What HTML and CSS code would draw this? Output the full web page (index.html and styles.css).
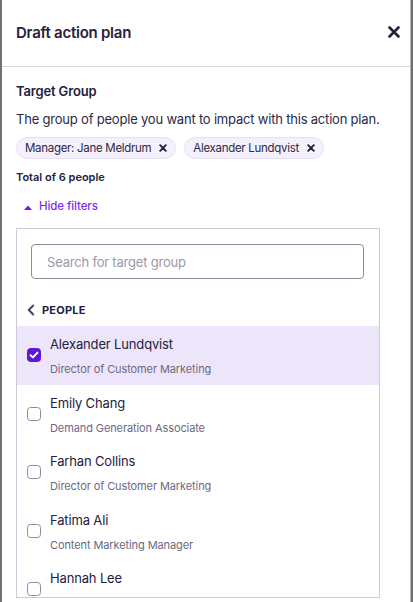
FILE: index.html
```html
<!DOCTYPE html>
<html lang="en">
<head>
<meta charset="utf-8">
<title>Draft action plan</title>
<link rel="stylesheet" href="styles.css">
</head>
<body>
<div class="panel">
  <header class="header">
    <h1 class="title">Draft action plan</h1>
    <button class="close" aria-label="Close">
      <svg width="12" height="12" viewBox="0 0 12 12"><path d="M1.5 1.5 L10.5 10.5 M10.5 1.5 L1.5 10.5" stroke="#24213f" stroke-width="2.6" stroke-linecap="round"/></svg>
    </button>
  </header>
  <div class="content">
    <h2 class="label">Target Group</h2>
    <p class="desc">The group of people you want to impact with this action plan.</p>
    <div class="chips">
      <span class="chip">Manager: Jane Meldrum <svg class="chip-x" width="8" height="8" viewBox="0 0 8 8"><path d="M1.2 1.2 L6.8 6.8 M6.8 1.2 L1.2 6.8" stroke="#24213f" stroke-width="1.9" stroke-linecap="round"/></svg></span>
      <span class="chip">Alexander Lundqvist <svg class="chip-x" width="8" height="8" viewBox="0 0 8 8"><path d="M1.2 1.2 L6.8 6.8 M6.8 1.2 L1.2 6.8" stroke="#24213f" stroke-width="1.9" stroke-linecap="round"/></svg></span>
    </div>
    <p class="total">Total of 6 people</p>
    <button class="toggle">
      <svg width="8" height="5" viewBox="0 0 8 5"><path d="M0 5 L4 0.5 L8 5 Z" fill="#6b1fd1"/></svg>
      <span>Hide filters</span>
    </button>
    <div class="filter-box">
      <div class="search-wrap">
        <input class="search" type="text" placeholder="Search for target group">
      </div>
      <div class="crumb">
        <svg width="8" height="12" viewBox="0 0 8 12"><path d="M6.2 1.5 L1.8 6 L6.2 10.5" stroke="#4a4660" stroke-width="2" fill="none" stroke-linecap="round" stroke-linejoin="round"/></svg>
        <span>PEOPLE</span>
      </div>
      <ul class="list">
        <li class="row selected">
          <span class="box checked"><svg width="10" height="8" viewBox="0 0 10 8"><path d="M1.5 4.2 L3.9 6.4 L8.5 1.6" stroke="#fff" stroke-width="1.9" fill="none" stroke-linecap="round" stroke-linejoin="round"/></svg></span>
          <div class="person"><div class="name">Alexander Lundqvist</div><div class="role">Director of Customer Marketing</div></div>
        </li>
        <li class="row">
          <span class="box"></span>
          <div class="person"><div class="name">Emily Chang</div><div class="role">Demand Generation Associate</div></div>
        </li>
        <li class="row">
          <span class="box"></span>
          <div class="person"><div class="name">Farhan Collins</div><div class="role">Director of Customer Marketing</div></div>
        </li>
        <li class="row">
          <span class="box"></span>
          <div class="person"><div class="name">Fatima Ali</div><div class="role">Content Marketing Manager</div></div>
        </li>
        <li class="row">
          <span class="box"></span>
          <div class="person"><div class="name">Hannah Lee</div></div>
        </li>
      </ul>
    </div>
  </div>
</div>
</body>
</html>
```
FILE: styles.css
```css
* { box-sizing: border-box; }
html, body { margin: 0; padding: 0; }
body {
  background: #707070;
  height: 602px;
  overflow: hidden;
  font-family: Inter, "Noto Sans", sans-serif;
  color: #24213f;
}
.panel {
  margin-left: 2px;
  width: 409px;
  height: 602px;
  background: #fff;
  border-right: 1px solid #b9b9bd;
  overflow: hidden;
}
.header {
  height: 67px;
  border-bottom: 1px solid #d6d3de;
  display: flex;
  align-items: center;
  justify-content: space-between;
  padding: 0 10px 0 14px;
}
.title {
  margin: 0;
  font-size: 15px;
  font-weight: 600;
  letter-spacing: -0.25px;
  line-height: 20px;
  margin-top: -1px;
}
.close {
  border: 0;
  background: none;
  padding: 0;
  width: 12px;
  height: 12px;
  display: flex;
  margin-top: -3px;
}
.content {
  padding: 16px 0 0 14px;
  width: 378px;
}
.label {
  margin: 0;
  font-size: 13px;
  font-weight: 600;
  letter-spacing: -0.15px;
  line-height: 16px;
}
.desc {
  margin: 12px 0 0;
  font-size: 13px;
  line-height: 16px;
  letter-spacing: -0.2px;
  color: #2c2945;
  white-space: nowrap;
}
.chips {
  display: flex;
  gap: 8px;
  margin-top: 10px;
}
.chip {
  display: inline-flex;
  align-items: center;
  gap: 8px;
  height: 22px;
  padding: 0 8px 0 8px;
  background: #f4f0fc;
  border: 1px solid #e7e1f4;
  border-radius: 11px;
  font-size: 11.5px;
  letter-spacing: -0.3px;
  color: #2c2945;
}
.chip-x { display: block; }
.total {
  margin: 10px 0 0;
  font-size: 11px;
  font-weight: 600;
  line-height: 16px;
}
.toggle {
  margin-top: 13px;
  border: 0;
  background: none;
  padding: 0 0 0 8px;
  display: flex;
  align-items: center;
  gap: 7px;
  font-family: inherit;
  font-size: 11.5px;
  font-weight: 500;
  letter-spacing: -0.1px;
  line-height: 16px;
  color: #7a2ff0;
}
.toggle svg { display: block; margin-top: 2px; }
.filter-box {
  margin-top: 14px;
  width: 364px;
  height: 370px;
  border: 1px solid #cfcad9;
  overflow: hidden;
}
.search-wrap { padding: 15px 15px 0 14px; }
.search {
  display: block;
  width: 100%;
  height: 35px;
  border: 1px solid #8f8b9d;
  border-radius: 4px;
  padding: 0 15px;
  font-family: inherit;
  font-size: 13px;
  letter-spacing: -0.2px;
  color: #24213f;
  outline: none;
}
.search::placeholder { color: #9b98a8; }
.crumb {
  display: flex;
  align-items: center;
  gap: 7px;
  padding: 0 0 0 10px;
  margin-top: 23px;
  height: 16px;
  font-size: 11px;
  font-weight: 700;
  letter-spacing: 0.2px;
  color: #24213f;
}
.crumb svg { display: block; }
.list {
  list-style: none;
  margin: 8px 0 0;
  padding: 0;
}
.row {
  height: 58.5px;
  display: flex;
  align-items: flex-start;
  gap: 8px;
  padding-left: 10px;
  padding-top: 10px;
}
.row.selected { background: #ede6fa; }
.box {
  width: 14px;
  height: 14px;
  flex: none;
  margin-top: 12px;
  border: 1.5px solid #8f8b9d;
  border-radius: 3.5px;
  background: #fff;
  display: flex;
  align-items: center;
  justify-content: center;
}
.box.checked {
  background: #5d17d6;
  border-color: #5d17d6;
}
.box svg { display: block; }
.person { padding-left: 1px; }
.name {
  font-size: 13px;
  line-height: 16px;
  letter-spacing: -0.15px;
  color: #24213f;
}
.role {
  margin-top: 10px;
  font-size: 11px;
  line-height: 14px;
  letter-spacing: -0.1px;
  color: #6c6982;
}
```
